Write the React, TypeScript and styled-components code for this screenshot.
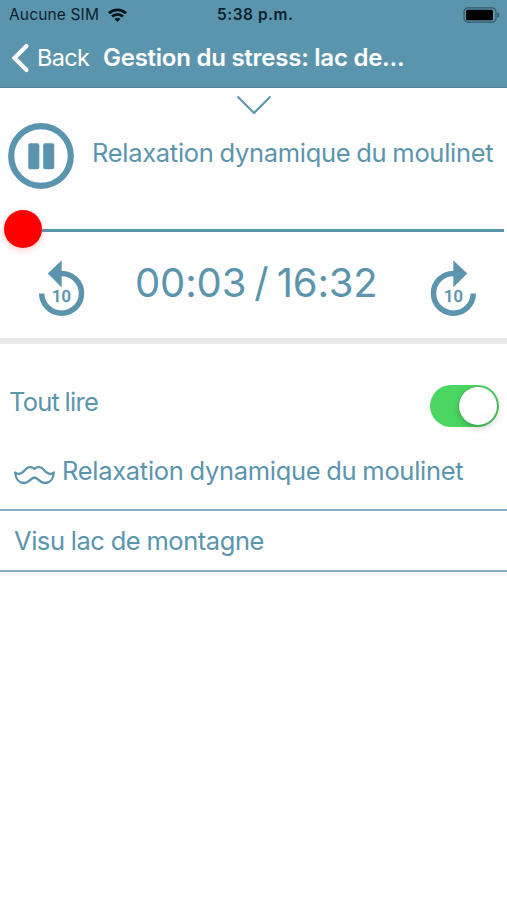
import React from "react";
import styled, { createGlobalStyle } from "styled-components";

const BLUE = "#5b95ad";

const GlobalStyle = createGlobalStyle`
  * { box-sizing: border-box; }
  body { margin: 0; background: #fefefe; }
  svg { display: block; flex: none; }
`;

const Screen = styled.main`
  width: 507px;
  height: 900px;
  overflow: hidden;
  background: #fefefe;
  color: ${BLUE};
  font-family: Inter, "Liberation Sans", sans-serif;
`;

const Label = styled.span<{ $size: number; $spacing?: number; $word?: number; $weight?: number }>`
  font-size: ${(p) => p.$size}px;
  letter-spacing: ${(p) => p.$spacing ?? 0}px;
  word-spacing: ${(p) => p.$word ?? 0}px;
  font-weight: ${(p) => p.$weight ?? 400};
  line-height: 1.2;
  white-space: nowrap;
`;

const Header = styled.header`
  height: 88px;
  background: ${BLUE};
  border-bottom: 1px solid #4f8196;
`;

const StatusBar = styled.div`
  display: grid;
  grid-template-columns: 217px 1fr auto;
  align-items: center;
  height: 30px;
  padding: 0 7px 0 0;
  color: #0d222e;
`;

const Carrier = styled.div`
  display: flex;
  align-items: center;
  gap: 9px;
  padding-left: 9px;
`;

const NavBar = styled.nav`
  display: flex;
  align-items: center;
  height: 56px;
  padding-left: 11px;
  color: #fff;
`;

const BackButton = styled.button`
  display: flex;
  align-items: center;
  gap: 7px;
  width: 92px;
  padding: 0;
  border: 0;
  background: none;
  color: inherit;
  font-family: inherit;
`;

const Player = styled.section`
  height: 256px;
  border-bottom: 6px solid #e8e8e8;
`;

const Collapse = styled.div`
  display: flex;
  justify-content: center;
  height: 35px;
  padding: 7px 0 0 1px;
`;

const TrackRow = styled.div`
  display: flex;
  height: 66px;
  padding-left: 8px;
  gap: 18px;
`;

const TrackTitle = styled.div`
  padding-top: 15px;
`;

const Slider = styled.div`
  display: flex;
  align-items: center;
  height: 40px;
  margin-top: 20px;
  padding: 0 3px 0 4px;
`;

const Thumb = styled.div`
  width: 38px;
  height: 38px;
  border-radius: 50%;
  background: #fe0000;
  box-shadow: 0 2px 6px rgba(255, 0, 0, 0.22);
`;

const Track = styled.div`
  flex: 1;
  height: 3px;
  margin-top: 2px;
  background: ${BLUE};
`;

const Controls = styled.div`
  display: grid;
  grid-template-columns: 97px 1fr 77px;
  height: 70px;
  padding: 10px 0 0 38px;
`;

const SkipText = styled.text`
  font: 500 16.5px Roboto, sans-serif;
  fill: ${BLUE};
  stroke: ${BLUE};
  stroke-width: 0.3px;
`;

const PlayAll = styled.div`
  display: flex;
  justify-content: space-between;
  height: 84px;
  padding: 41px 8px 0 9px;
`;

const PlayAllText = styled.div`
  padding-top: 2px;
`;

const Switch = styled.div`
  display: flex;
  justify-content: flex-end;
  width: 69px;
  height: 42px;
  padding: 2px;
  border-radius: 21px;
  background: #4bd662;
`;

const Knob = styled.div`
  width: 38px;
  height: 38px;
  border-radius: 50%;
  background: #fff;
  box-shadow: 0 3px 7px rgba(0, 0, 0, 0.2), 0 0 2px rgba(0, 0, 0, 0.25);
`;

const ListRow = styled.div<{ $height: number; $top: number }>`
  display: flex;
  gap: 7px;
  height: ${(p) => p.$height}px;
  padding: ${(p) => p.$top}px 14px 0;
  border-bottom: 2px solid #86adc2;
`;

const MustacheSlot = styled.div`
  padding-top: 9px;
`;

function SkipIcon({ forward = false }: { forward?: boolean }) {
  return (
    <svg width="48" height="60" viewBox="0 0 48 60" role="img" aria-label={forward ? "Forward 10" : "Back 10"}>
      <g transform={forward ? "translate(47 0) scale(-1 1)" : undefined}>
        <path d="M3.700 34.500A19.900 19.900 0 1 0 23.600 14.400H20" fill="none" stroke={BLUE} strokeWidth="5.500" />
        <path d="M23.700 1.300V28.500L9.800 14.600Z" fill={BLUE} />
      </g>
      <SkipText x="23.5" y="43" textAnchor="middle">10</SkipText>
    </svg>
  );
}

export default function App() {
  return (
    <>
      <GlobalStyle />
      <Screen>
        <Header>
          <StatusBar>
            <Carrier>
              <Label $size={15.5} $spacing={0.15}>Aucune SIM</Label>
              <svg width="19" height="14" viewBox="0 0 19 14" fill="none" stroke="#08131a" strokeWidth="2.700">
                <path d="M1 5.200C5.800.7 13.200.7 18 5.200" />
                <path d="M4 8.600C7.200 5.600 11.800 5.600 15 8.600" />
                <path d="M6.500 11Q9.500 8.400 12.500 11L9.500 14Z" fill="#08131a" stroke="none" />
              </svg>
            </Carrier>
            <Label $size={15.5} $weight={600} $spacing={0.5}>5:38 p.m.</Label>
            <svg width="37" height="16" viewBox="0 0 37 16">
              <rect x="1" y="0.8" width="32" height="14.4" rx="4" fill="none" stroke="#35586a" strokeWidth="1.2" />
              <rect x="3" y="2.8" width="27" height="10.4" rx="1.5" fill="#000" />
              <path d="M34.300 5.200Q36.500 5.700 36.500 8T34.300 10.800Z" fill="#35586a" />
            </svg>
          </StatusBar>
          <NavBar>
            <BackButton>
              <svg width="19" height="30" viewBox="0 0 19 30" fill="none" stroke="#fff" strokeWidth="4.200" strokeLinecap="round">
                <path d="M15.500 3L3.500 15L15.500 27" />
              </svg>
              <Label $size={23.5} $spacing={-0.7}>Back</Label>
            </BackButton>
            <Label $size={24} $weight={600} $spacing={-0.25}>Gestion du stress: lac de...</Label>
          </NavBar>
        </Header>
        <Player>
          <Collapse>
            <svg width="36" height="20" viewBox="0 0 36 20" fill="none" stroke={BLUE} strokeWidth="2">
              <path d="M1.500 1.500L18 18L34.500 1.500" />
            </svg>
          </Collapse>
          <TrackRow>
            <svg width="66" height="66" viewBox="0 0 66 66">
              <circle cx="33" cy="33" r="29.800" fill="none" stroke={BLUE} strokeWidth="6.200" />
              <rect x="20.300" y="20.300" width="11" height="26" rx="2" fill={BLUE} />
              <rect x="35.200" y="20.300" width="11" height="26" rx="2" fill={BLUE} />
            </svg>
            <TrackTitle>
              <Label $size={25.5} $spacing={-0.3} $word={-0.9}>Relaxation dynamique du moulinet</Label>
            </TrackTitle>
          </TrackRow>
          <Slider>
            <Thumb />
            <Track />
          </Slider>
          <Controls>
            <SkipIcon />
            <Label $size={40} $spacing={-0.15} $word={-3}>00:03 / 16:32</Label>
            <SkipIcon forward />
          </Controls>
        </Player>
        <PlayAll>
          <PlayAllText>
            <Label $size={25.5} $spacing={-0.75} $word={-1}>Tout lire</Label>
          </PlayAllText>
          <Switch role="switch" aria-checked="true">
            <Knob />
          </Switch>
        </PlayAll>
        <ListRow $height={83} $top={28}>
          <MustacheSlot>
            <svg width="41" height="20" viewBox="0 0 41 20" fill="none" stroke={BLUE} strokeWidth="2.300" strokeLinejoin="round">
              <path d="M20.500 4C18 1.500 14 1.500 11.500 4.500C8 9 4 10 1.200 7.500C1.500 13 4.500 18 10.500 18C15.500 18 17 12.500 20.500 12.500S25.500 18 30.500 18C36.500 18 39.500 13 39.800 7.500C37 10 33 9 29.500 4.500C27 1.500 23 1.500 20.500 4Z" />
            </svg>
          </MustacheSlot>
          <Label $size={25.5} $spacing={-0.3} $word={-0.9}>Relaxation dynamique du moulinet</Label>
        </ListRow>
        <ListRow $height={61} $top={15}>
          <Label $size={25.5} $spacing={-0.45} $word={-0.5}>Visu lac de montagne</Label>
        </ListRow>
      </Screen>
    </>
  );
}
